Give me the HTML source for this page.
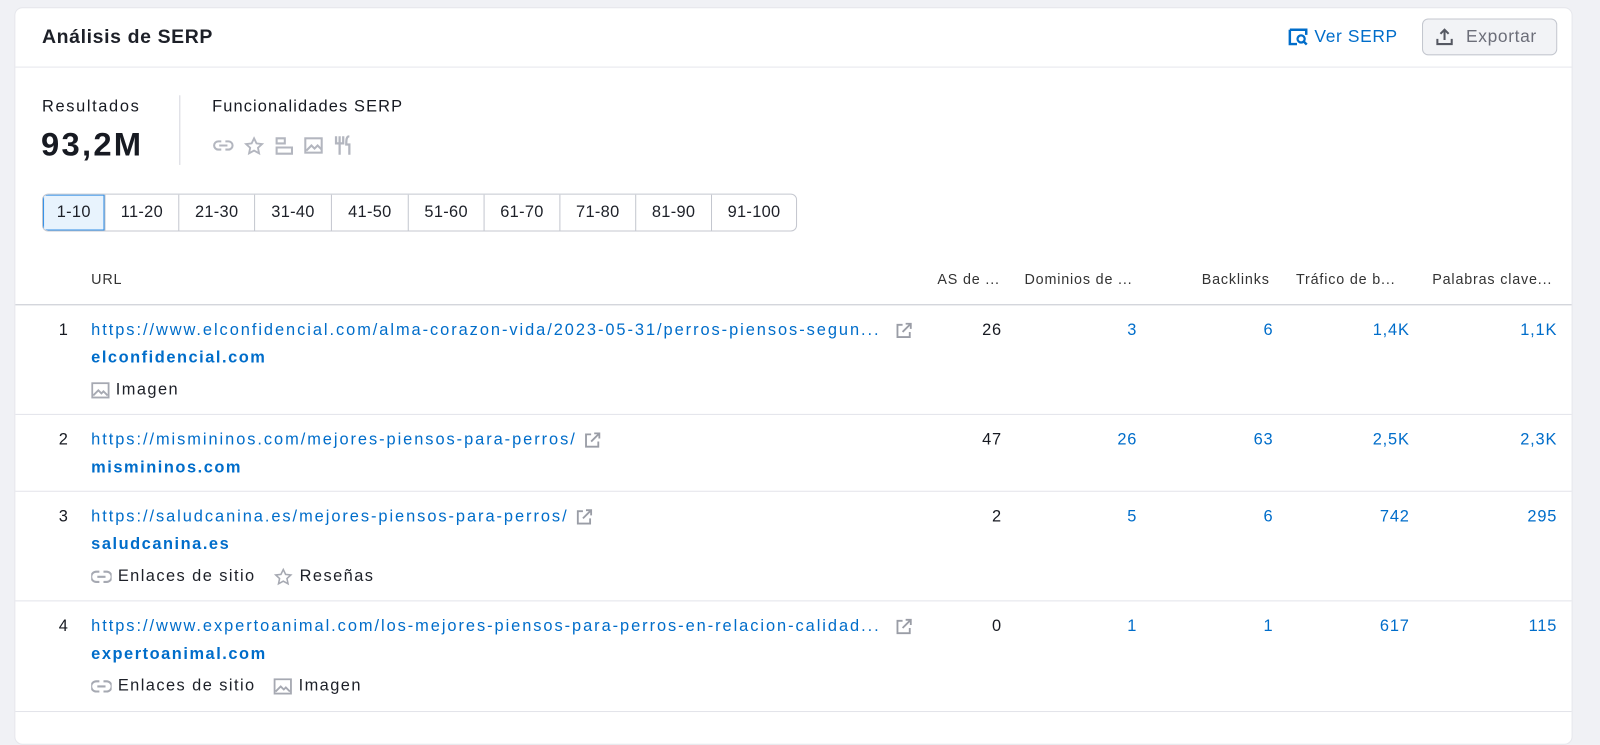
<!DOCTYPE html>
<html><head><meta charset="utf-8"><style>
*{box-sizing:border-box;margin:0;padding:0}
html,body{width:1600px;height:714px;overflow:hidden;background:#f0f1f5;font-family:"Liberation Sans",Arial,sans-serif;color:#171a22}
#w{position:absolute;left:0;top:0;width:1562px;height:700px;transform:scale(1.0245);transform-origin:0 0}
.card{position:absolute;left:14px;top:7px;width:1521px;height:720px;background:#fff;border-radius:8px;border:1px solid #e6e7ec;letter-spacing:1.2px}
.a{position:absolute;white-space:nowrap}
.t{font-size:19px;font-weight:bold;left:26px;top:18px;color:#1d2028;letter-spacing:0.6px}
.hl{position:absolute;left:0;right:0;top:57px;height:1px;background:#e6e7ec}
.blue{color:#006dca}
.btn{position:absolute;left:1373px;top:10px;width:132px;height:36px;background:#f2f3f6;border:1px solid #c4c7cf;border-radius:6px;font-size:17px;color:#6c6e79;letter-spacing:0.6px}
.pg{position:absolute;top:181px;left:26px;height:37px;display:flex;border:1px solid #c4c7cf;border-radius:6px;overflow:hidden;letter-spacing:0.3px}
.pg div{height:35px;line-height:35px;text-align:center;font-size:16px;border-left:1px solid #c4c7cf;color:#1d2028}
.pg div:first-child{border-left:none;background:#e8f3fd;box-shadow:inset 0 0 0 1px #2e8de6}
.th{font-size:14px;color:#333;top:256px;letter-spacing:0.8px}
.line{position:absolute;left:0;right:0;height:1px;background:#e3e4ea}
.r{font-size:16px;text-align:right;letter-spacing:0.8px}
.url{font-size:16px;color:#006dca;letter-spacing:1.9px;display:flex;align-items:center}
.url svg{margin-left:6px}
.dom{font-size:16px;font-weight:bold;color:#006dca;letter-spacing:1.5px}
.f{font-size:16px;color:#1d2028;display:flex;align-items:center;gap:6px;letter-spacing:1.4px}
svg{display:block}
</style></head><body><div id="w"><div class="card">
<div class="a t">Análisis de SERP</div>
<div class="a blue" style="left:1242px;top:18px;font-size:17px;display:flex;align-items:center;gap:6px;letter-spacing:0.6px">
<svg width="20" height="18" viewBox="0 0 20 18"><path d="M2 2h16v5M2 2v14h7" fill="none" stroke="#006dca" stroke-width="2.4"/><circle cx="13" cy="11" r="3.5" fill="none" stroke="#006dca" stroke-width="2.2"/><path d="M15.5 13.5l3 3" stroke="#006dca" stroke-width="2.4"/></svg>Ver SERP</div>
<div class="btn"><svg style="position:absolute;left:12px;top:8px" width="18" height="18" viewBox="0 0 18 18"><path d="M9 12V2M5 6l4-4 4 4M2 11v5h14v-5" fill="none" stroke="#555862" stroke-width="2"/></svg><span class="a" style="left:42px;top:7px">Exportar</span></div>
<div class="hl"></div>
<div class="a" style="left:26px;top:88px;font-size:16px;letter-spacing:1.6px">Resultados</div>
<div class="a" style="left:25px;top:115px;font-size:32px;font-weight:bold;letter-spacing:2.2px">93,2M</div>
<div class="a" style="left:160px;top:85px;width:1px;height:68px;background:#d5d7de"></div>
<div class="a" style="left:192px;top:88px;font-size:16px;letter-spacing:1.1px">Funcionalidades SERP</div>
<div class="a" style="left:192px;top:124px;display:flex;gap:9px;align-items:center">
<svg width="22" height="18" viewBox="0 0 22 18"><path d="M9 5H6a4 4 0 000 8h3M13 5h3a4 4 0 010 8h-3M7 9h8" fill="none" stroke="#b3b6bf" stroke-width="2"/></svg>
<svg width="20" height="19" viewBox="0 0 20 19"><path d="M10 2l2.4 5 5.4.6-4 3.7 1.1 5.4L10 14l-4.9 2.7 1.1-5.4-4-3.7 5.4-.6z" fill="none" stroke="#b3b6bf" stroke-width="1.8"/></svg>
<svg width="20" height="19" viewBox="0 0 20 19"><path d="M3 2h8v5H3zM3 11h15v6H3z" fill="none" stroke="#b3b6bf" stroke-width="2"/></svg>
<svg width="20" height="18" viewBox="0 0 20 18"><rect x="2" y="2" width="16" height="14" fill="none" stroke="#b3b6bf" stroke-width="2"/><path d="M3 14l5-5 3 3 3-3 4 4" fill="none" stroke="#b3b6bf" stroke-width="2"/></svg>
<svg width="22" height="20" viewBox="0 0 22 20"><path d="M3 1v7h7V1M6.5 1v18M16 1c-3 0-3 4-3 8h3v10" fill="none" stroke="#b3b6bf" stroke-width="2.2"/></svg>
</div>
<div class="pg"><div style="width:60px">1-10</div><div style="width:72px">11-20</div><div style="width:74px">21-30</div><div style="width:75px">31-40</div><div style="width:75px">41-50</div><div style="width:74px">51-60</div><div style="width:74px">61-70</div><div style="width:74px">71-80</div><div style="width:74px">81-90</div><div style="width:83px">91-100</div></div>
<div class="a th" style="left:74px">URL</div>
<div class="a th" style="left:900px">AS de ...</div>
<div class="a th" style="left:985px">Dominios de ...</div>
<div class="a th" style="left:1158px">Backlinks</div>
<div class="a th" style="left:1250px">Tráfico de b...</div>
<div class="a th" style="left:1383px">Palabras clave...</div>
<div class="line" style="top:289px;background:#c4c7cf"></div>

<div class="a r" style="left:30px;width:22px;top:306px">1</div>
<div class="a url" style="left:74px;top:306px">https://www.elconfidencial.com/alma-corazon-vida/2023-05-31/perros-piensos-segun...</div>
<div class="a dom" style="left:74px;top:333px">elconfidencial.com</div>
<div class="a f" style="left:74px;top:364px"><svg width="18" height="16" viewBox="0 0 18 16"><rect x="1" y="1" width="16" height="14" fill="none" stroke="#a6a9b2" stroke-width="1.8"/><path d="M2 13l5-5 3 3 2-2 4 4" fill="none" stroke="#a6a9b2" stroke-width="1.8"/></svg>Imagen</div>

<div class="line" style="top:396px"></div>
<div class="a r" style="left:30px;width:22px;top:413px">2</div>
<div class="a url" style="left:74px;top:413px">https://mismininos.com/mejores-piensos-para-perros/<svg width="18" height="18" viewBox="0 0 18 18"><path d="M8 3H3v12h12v-5M11 2h5v5M16 2l-8 8" fill="none" stroke="#9a9da6" stroke-width="1.8"/></svg></div>
<div class="a dom" style="left:74px;top:440px">mismininos.com</div>

<div class="line" style="top:471px"></div>
<div class="a r" style="left:30px;width:22px;top:488px">3</div>
<div class="a url" style="left:74px;top:488px">https://saludcanina.es/mejores-piensos-para-perros/<svg width="18" height="18" viewBox="0 0 18 18"><path d="M8 3H3v12h12v-5M11 2h5v5M16 2l-8 8" fill="none" stroke="#9a9da6" stroke-width="1.8"/></svg></div>
<div class="a dom" style="left:74px;top:515px">saludcanina.es</div>
<div class="a f" style="left:74px;top:546px"><svg width="20" height="14" viewBox="0 0 20 14"><path d="M8 2H5a5 5 0 000 10h3M12 2h3a5 5 0 010 10h-3M6 7h8" fill="none" stroke="#a6a9b2" stroke-width="2"/></svg>Enlaces de sitio<span style="width:6px"></span><svg width="19" height="18" viewBox="0 0 20 19"><path d="M10 2l2.4 5 5.4.6-4 3.7 1.1 5.4L10 14l-4.9 2.7 1.1-5.4-4-3.7 5.4-.6z" fill="none" stroke="#a6a9b2" stroke-width="1.6"/></svg>Reseñas</div>

<div class="line" style="top:578px"></div>
<div class="a r" style="left:30px;width:22px;top:595px">4</div>
<div class="a url" style="left:74px;top:595px">https://www.expertoanimal.com/los-mejores-piensos-para-perros-en-relacion-calidad...</div>
<div class="a dom" style="left:74px;top:622px">expertoanimal.com</div>
<div class="a f" style="left:74px;top:653px"><svg width="20" height="14" viewBox="0 0 20 14"><path d="M8 2H5a5 5 0 000 10h3M12 2h3a5 5 0 010 10h-3M6 7h8" fill="none" stroke="#a6a9b2" stroke-width="2"/></svg>Enlaces de sitio<span style="width:6px"></span><svg width="18" height="16" viewBox="0 0 18 16"><rect x="1" y="1" width="16" height="14" fill="none" stroke="#a6a9b2" stroke-width="1.8"/><path d="M2 13l5-5 3 3 2-2 4 4" fill="none" stroke="#a6a9b2" stroke-width="1.8"/></svg>Imagen</div>
<div class="line" style="top:686px"></div>

<svg class="a" style="left:858px;top:306px" width="18" height="18" viewBox="0 0 18 18"><path d="M8 3H3v12h12v-5M11 2h5v5M16 2l-8 8" fill="none" stroke="#9a9da6" stroke-width="1.8"/></svg>
<svg class="a" style="left:858px;top:595px" width="18" height="18" viewBox="0 0 18 18"><path d="M8 3H3v12h12v-5M11 2h5v5M16 2l-8 8" fill="none" stroke="#9a9da6" stroke-width="1.8"/></svg>

<div class="a r" style="left:863px;width:100px;top:306px">26</div>
<div class="a r blue" style="left:995px;width:100px;top:306px">3</div>
<div class="a r blue" style="left:1128px;width:100px;top:306px">6</div>
<div class="a r blue" style="left:1261px;width:100px;top:306px">1,4K</div>
<div class="a r blue" style="left:1405px;width:100px;top:306px">1,1K</div>

<div class="a r" style="left:863px;width:100px;top:413px">47</div>
<div class="a r blue" style="left:995px;width:100px;top:413px">26</div>
<div class="a r blue" style="left:1128px;width:100px;top:413px">63</div>
<div class="a r blue" style="left:1261px;width:100px;top:413px">2,5K</div>
<div class="a r blue" style="left:1405px;width:100px;top:413px">2,3K</div>

<div class="a r" style="left:863px;width:100px;top:488px">2</div>
<div class="a r blue" style="left:995px;width:100px;top:488px">5</div>
<div class="a r blue" style="left:1128px;width:100px;top:488px">6</div>
<div class="a r blue" style="left:1261px;width:100px;top:488px">742</div>
<div class="a r blue" style="left:1405px;width:100px;top:488px">295</div>

<div class="a r" style="left:863px;width:100px;top:595px">0</div>
<div class="a r blue" style="left:995px;width:100px;top:595px">1</div>
<div class="a r blue" style="left:1128px;width:100px;top:595px">1</div>
<div class="a r blue" style="left:1261px;width:100px;top:595px">617</div>
<div class="a r blue" style="left:1405px;width:100px;top:595px">115</div>
</div></div></body></html>
